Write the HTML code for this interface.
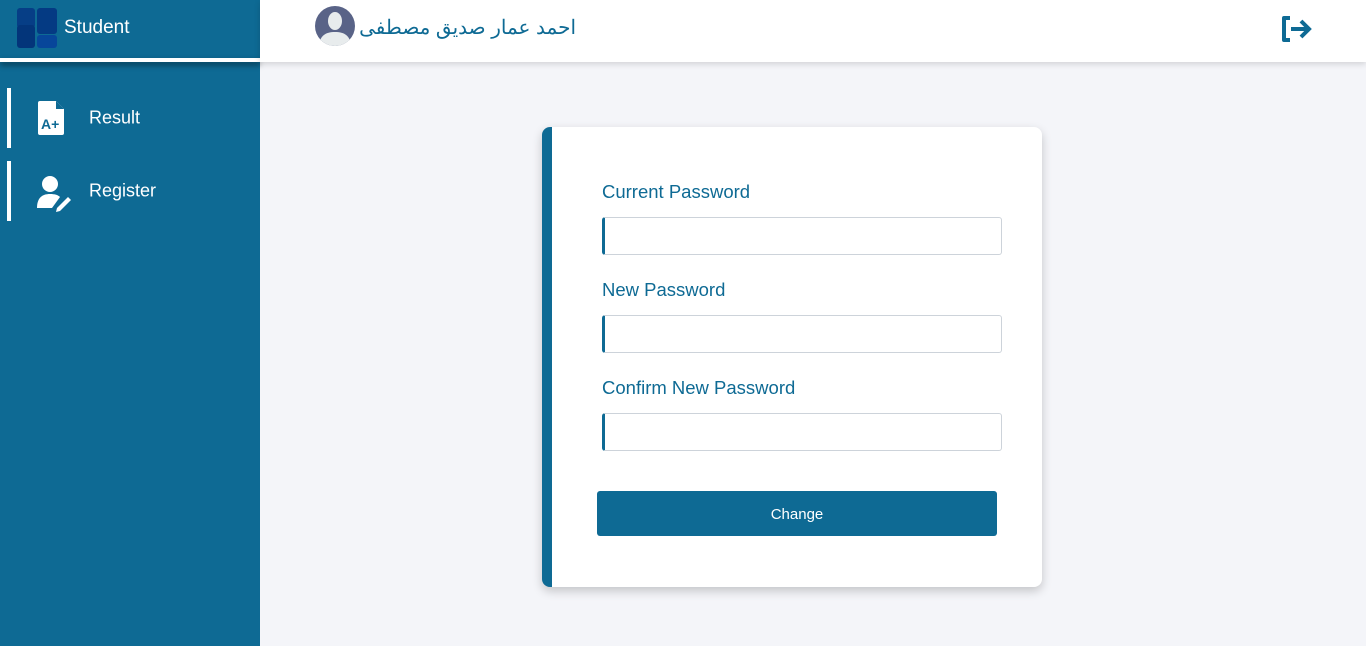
<!DOCTYPE html>
<html><head><meta charset="utf-8"><style>
*{margin:0;padding:0;box-sizing:border-box}
body{width:1366px;height:646px;overflow:hidden;background:#f4f5f9;font-family:"Liberation Sans","Noto Sans CJK SC",sans-serif;position:relative}
.side{position:absolute;left:0;top:0;width:260px;height:646px;background:#0e6a94}
.side .top{height:58px;position:relative;color:#fff;font-size:19px}
.strip{position:absolute;top:58px;left:0;width:260px;height:4px;background:#fff;box-shadow:0 3px 6px rgba(0,0,0,.5)}
.hdr{position:absolute;left:260px;top:0;right:0;height:62px;background:#fff;box-shadow:0 2px 6px rgba(0,0,0,.15)}
.item{position:absolute;left:7px;width:253px;height:60px;border-left:4px solid #fff;color:#fff;font-size:18px}
.item span{position:absolute;left:78px;top:50%;transform:translateY(-50%)}
.card{position:absolute;left:542px;top:127px;width:500px;height:460px;background:#fff;border-radius:8px;border-left:10px solid #0e6a94;box-shadow:0 4px 10px rgba(0,0,0,.2)}
label{position:absolute;left:50px;color:#0e6a94;font-size:18.5px}
.in{position:absolute;left:50px;width:400px;height:38px;border:1px solid #cdd3da;border-left:3px solid #0e6a94;border-radius:3px}
.btn{position:absolute;left:45px;top:364px;width:400px;height:45px;background:#0e6a94;color:#fff;font-size:15px;border-radius:3px;text-align:center;line-height:47px}
</style></head><body>
<div class="side">
 <div class="top">
  <div style="position:absolute;left:17px;top:8px;width:18px;height:20px;background:#063e86;border-radius:3px"></div>
  <div style="position:absolute;left:17px;top:25px;width:18px;height:23px;background:#03357a;border-radius:3px"></div>
  <div style="position:absolute;left:37px;top:8px;width:20px;height:26px;background:#043a83;border-radius:3px"></div>
  <div style="position:absolute;left:37px;top:35px;width:20px;height:13px;background:#07469a;border-radius:3px"></div>
  <span style="position:absolute;left:64px;top:17px">Student</span>
 </div>
 <div class="item" style="top:88px">
  <svg style="position:absolute;left:26px;top:13px" width="30" height="34" viewBox="0 0 30 34"><path d="M3 0h16l8 8v24a2 2 0 0 1-2 2H3a2 2 0 0 1-2-2V2a2 2 0 0 1 2-2z" fill="#fff"/><path d="M19 0v8h8" fill="#0e6a94"/><text x="4" y="28" font-size="14" font-weight="bold" fill="#0e6a94" font-family="Liberation Sans">A+</text></svg>
  <span>Result</span></div>
 <div class="item" style="top:161px">
  <svg style="position:absolute;left:24px;top:13px" width="40" height="38" viewBox="0 0 40 38"><circle cx="15" cy="10" r="8" fill="#fff"/><path d="M2 34c0-10 5-14 13-14 5 0 8 1 10 3l-8 11z" fill="#fff"/><path d="M22 34l-1 4 4-1 11-11-3-3z" fill="#fff"/></svg>
  <span>Register</span></div>
</div>
<div class="strip"></div>
<div class="hdr">
 <svg style="position:absolute;left:55px;top:6px" width="40" height="40" viewBox="0 0 40 40"><circle cx="20" cy="20" r="20" fill="#596387"/><clipPath id="c"><circle cx="20" cy="20" r="20"/></clipPath><g clip-path="url(#c)" fill="#e8eced"><ellipse cx="20" cy="15" rx="7" ry="9"/><path d="M4 42c0-12 6-16 16-16s16 4 16 16z"/></g></svg>
 <span style="position:absolute;right:790px;top:15px;font-size:20px;color:#0e6a94;direction:rtl;white-space:nowrap">احمد عمار صديق مصطفى</span>
 <svg style="position:absolute;left:1020px;top:15px" width="34" height="28" viewBox="0 0 34 28"><path d="M10 3H4v22h6" fill="none" stroke="#0e6a94" stroke-width="4" stroke-linejoin="round"/><path d="M11 14h17M21 6l8 8-8 8" fill="none" stroke="#0e6a94" stroke-width="4"/></svg>
</div>
<div class="card">
 <label style="top:54px">Current Password</label><div class="in" style="top:90px"></div>
 <label style="top:152px">New Password</label><div class="in" style="top:188px"></div>
 <label style="top:250px">Confirm New Password</label><div class="in" style="top:286px"></div>
 <div class="btn">Change</div>
</div>
</body></html>
